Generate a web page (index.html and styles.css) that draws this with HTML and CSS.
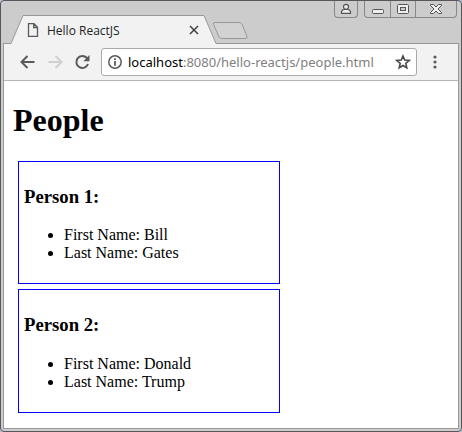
FILE: index.html
```html
<!DOCTYPE html>
<html lang="en">
<head>
    <meta charset="UTF-8">
    <meta name="viewport" content="width=device-width, initial-scale=1.0">
    <title>Hello ReactJS</title>
    <link rel="stylesheet" href="styles.css">
</head>
<body>
    <div class="window">
        <header class="tab-strip">
            <svg class="tab-edge" width="21" height="29" viewBox="0 0 21 29">
                <path d="M0 29V28.500H8L20 .5H21V29Z" fill="#f2f2f2"/>
                <path d="M0 28.500H8L20 .5H21" fill="none" stroke="#999"/>
            </svg>
            <div class="tab">
                <svg width="12" height="14" viewBox="0 0 12 14" fill="none" stroke="#5a5a5a" stroke-width="1.300">
                    <path d="M1.500.7H7L10.500 4.300V13.300H1.500ZM6.700.7V4.500H10.500"/>
                </svg>
                <span class="tab-title">Hello ReactJS</span>
                <button class="icon-button" aria-label="Close tab">
                    <svg width="10" height="10" viewBox="0 0 10 10" stroke="#444" stroke-width="1.600">
                        <path d="M1 1L9 9M9 1L1 9"/>
                    </svg>
                </button>
            </div>
            <svg class="tab-edge" width="14" height="29" viewBox="0 0 14 29">
                <path d="M0 .5H1L13 28.500H14V29H0Z" fill="#f2f2f2"/>
                <path d="M0 .5H1L13 28.500H14" fill="none" stroke="#999"/>
            </svg>
            <div class="strip-rest">
                <button class="icon-button new-tab" aria-label="New tab">
                    <svg width="36" height="18" viewBox="0 0 36 18" fill="#d2d2d2" stroke="#999">
                        <path d="M2 .5H26Q28 .5 29 2L34 14.500Q34.500 16.500 33 16.500H9Q7 16.500 6 15L.6 2.500Q0 .5 2 .5Z"/>
                    </svg>
                </button>
            </div>
            <div class="controls">
                <div class="control-group">
                    <button class="control user" aria-label="User">
                        <svg width="12" height="12" viewBox="0 0 12 12" fill="#eee" stroke="#555" stroke-width="1.200">
                            <path d="M1.500 10.400V8.500Q2 6.500 4.500 6.500H7.500Q10 6.500 10.500 8.500V10.400Z"/>
                            <circle cx="6" cy="3.800" r="2.500"/>
                        </svg>
                    </button>
                </div>
                <div class="control-group">
                    <button class="control minimize" aria-label="Minimize">
                        <svg width="12" height="12" viewBox="0 0 12 12" fill="#eee" stroke="#555">
                            <rect x=".5" y="6.500" width="11" height="4" rx="1"/>
                        </svg>
                    </button>
                    <button class="control maximize" aria-label="Maximize">
                        <svg width="12" height="12" viewBox="0 0 12 12" fill="#eee" stroke="#555">
                            <rect x=".5" y="1.500" width="11" height="9" rx="1"/>
                            <rect x="3.500" y="4.500" width="5" height="3" fill="#ccc"/>
                        </svg>
                    </button>
                    <button class="control close" aria-label="Close">
                        <svg width="12" height="12" viewBox="0 0 12 12" fill="#eee" stroke="#555">
                            <path d="M.5 1.500H3.500L6 4L8.500 1.500H11.500V2.500L8 6L11.500 9.500V10.500H8.500L6 8L3.500 10.500H.5V9.500L4 6L.5 2.500Z"/>
                        </svg>
                    </button>
                </div>
            </div>
        </header>
        <div class="frame">
            <nav class="toolbar">
                <button class="icon-button" aria-label="Back">
                    <svg width="16" height="16" viewBox="0 0 16 16" fill="none" stroke="#5a5a5a" stroke-width="2">
                        <path d="M14.500 8H2M7.500 2L1.500 8L7.500 14"/>
                    </svg>
                </button>
                <button class="icon-button" aria-label="Forward" disabled>
                    <svg width="16" height="16" viewBox="0 0 16 16" fill="none" stroke="#d0d0d0" stroke-width="2">
                        <path d="M1.500 8H14M8.500 2L14.500 8L8.500 14"/>
                    </svg>
                </button>
                <button class="icon-button" aria-label="Reload">
                    <svg width="16" height="16" viewBox="0 0 16 16">
                        <path d="M14 10A6 6 0 1 1 12.700 3.800L14 5.300" fill="none" stroke="#5a5a5a" stroke-width="2"/>
                        <path d="M15.500 1V7.200H9.300Z" fill="#5a5a5a"/>
                    </svg>
                </button>
                <div class="address-bar">
                    <svg width="14" height="14" viewBox="0 0 14 14">
                        <circle cx="7" cy="7" r="6.200" fill="none" stroke="#5a5a5a" stroke-width="1.500"/>
                        <path d="M6.100 6H7.900V10.800H6.100ZM6.100 3.200H7.900V4.900H6.100Z" fill="#5a5a5a"/>
                    </svg>
                    <span class="url"><span class="host">localhost</span>:8080/hello-reactjs/people.html</span>
                    <button class="icon-button" aria-label="Bookmark">
                        <svg width="16" height="16" viewBox="0 0 16 16" fill="none" stroke="#4a4a4a" stroke-width="1.600">
                            <path d="M8 2L9.700 6.100L14.200 6.500L10.800 9.400L11.800 13.800L8 11.500L4.200 13.800L5.200 9.400L1.800 6.500L6.300 6.100Z"/>
                        </svg>
                    </button>
                </div>
                <button class="icon-button menu" aria-label="Menu">
                    <svg width="4" height="14" viewBox="0 0 4 14" fill="#5a5a5a">
                        <circle cx="2" cy="2" r="1.600"/>
                        <circle cx="2" cy="7" r="1.600"/>
                        <circle cx="2" cy="12" r="1.600"/>
                    </svg>
                </button>
            </nav>
            <main class="page">
                <h1>People</h1>
                <div class="person">
                    <h3>Person 1:</h3>
                    <ul>
                        <li>First Name: Bill</li>
                        <li>Last Name: Gates</li>
                    </ul>
                </div>
                <div class="person">
                    <h3>Person 2:</h3>
                    <ul>
                        <li>First Name: Donald</li>
                        <li>Last Name: Trump</li>
                    </ul>
                </div>
            </main>
        </div>
    </div>
</body>
</html>
```

FILE: styles.css
```css
body {
    margin: 0;
    background-color: #b8c4d8;
    font-family: "Liberation Serif", "Times New Roman", serif;
}
svg {
    display: block;
}
.window {
    display: flex;
    flex-direction: column;
    box-sizing: border-box;
    min-height: 100vh;
    padding: 0 2px 2px;
    border: 1px solid #59565b;
    border-radius: 4px;
    background-color: #ccc;
}
.tab-strip {
    display: flex;
    align-items: flex-end;
    height: 43px;
    font-family: "Open Sans", "Segoe UI", sans-serif;
}
.tab-edge {
    flex: none;
}
.tab {
    display: flex;
    align-items: center;
    box-sizing: border-box;
    flex: 0 1 179px;
    height: 29px;
    padding: 0 4px 0 3px;
    border-top: 1px solid #999;
    background-color: #f2f2f2;
}
.tab-title {
    flex: 1;
    margin-left: 8px;
    font-size: 12px;
    white-space: nowrap;
    color: #222;
}
.icon-button {
    flex: none;
    padding: 0;
    border: none;
    background: none;
}
.strip-rest {
    flex: 1;
    box-sizing: border-box;
    height: 29px;
    padding-top: 7px;
    border-bottom: 1px solid #999;
}
.new-tab {
    margin-left: -4px;
}
.controls {
    position: absolute;
    top: 1px;
    right: 5px;
    display: flex;
    gap: 6px;
}
.control-group {
    display: flex;
    border: 1px solid #888;
    border-top: none;
    border-radius: 0 0 4px 4px;
}
.control {
    display: flex;
    align-items: center;
    justify-content: center;
    box-sizing: border-box;
    height: 16px;
    padding: 0;
    border: none;
    background: none;
}
.control + .control {
    border-left: 1px solid #888;
}
.user {
    width: 22px;
}
.minimize,
.maximize {
    width: 25px;
}
.close {
    width: 41px;
}
.frame {
    display: flex;
    flex-direction: column;
    flex: 1;
    border: 1px solid #999;
    border-top: none;
    background-color: white;
}
.toolbar {
    display: flex;
    align-items: center;
    gap: 11px;
    padding: 4px 21px 4px 16px;
    border-bottom: 1px solid #b6b6b6;
    background-color: #f2f2f2;
}
.address-bar {
    display: flex;
    align-items: center;
    flex: 1;
    box-sizing: border-box;
    min-width: 0;
    height: 28px;
    padding: 0 5px 0 6px;
    border: 1px solid #aaa;
    border-radius: 3px;
    background-color: white;
}
.url {
    flex: 1;
    margin-left: 6px;
    font-family: "Noto Sans", "Segoe UI", sans-serif;
    font-size: 13px;
    white-space: nowrap;
    color: #808080;
}
.host {
    color: black;
}
.menu {
    margin-left: 5px;
}
.page {
    padding: 0 9px;
}
.person {
    width: 250px;
    margin: 5px;
    padding: 5px;
    border: 1px solid blue;
}
```
